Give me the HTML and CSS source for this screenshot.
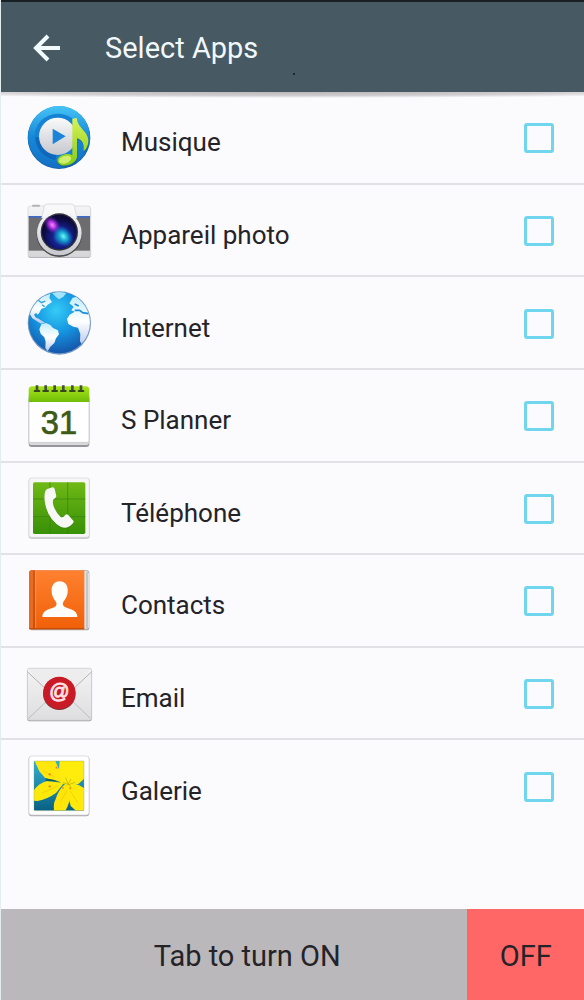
FILE: index.html
```
<!DOCTYPE html>
<html lang="fr">
<head>
  <meta charset="UTF-8">
  <meta name="viewport" content="width=device-width, initial-scale=1.0">
  <title>Select Apps</title>
  <link rel="stylesheet" href="styles.css">
</head>
<body>
  <header class="toolbar">
    <button class="back" type="button" aria-label="Back">
      <svg viewBox="0 0 28 28" width="28" height="28" fill="none" stroke="#f1fbfd" stroke-width="4">
        <path d="M27 14H4M15 2L3 14L15 26"/>
      </svg>
    </button>
    <h1>Select Apps</h1>
    <span class="speck"></span>
  </header>

  <ul class="apps">
    <li>
      <label class="app">
        <svg class="icon" viewBox="0 0 240 240">
          <defs>
            <linearGradient id="disc" x1="0" y1="0" x2="0" y2="1">
              <stop offset="0" stop-color="#45c4f6"/><stop offset=".5" stop-color="#1688d8"/><stop offset="1" stop-color="#1470c4"/>
            </linearGradient>
            <linearGradient id="silver" x1="0" y1="0" x2="0" y2="1">
              <stop offset="0" stop-color="#fafafa"/><stop offset="1" stop-color="#c6c8ce"/>
            </linearGradient>
            <linearGradient id="note" x1="0" y1="0" x2="0" y2="1">
              <stop offset="0" stop-color="#d9f25a"/><stop offset="1" stop-color="#86cc14"/>
            </linearGradient>
          </defs>
          <circle cx="117" cy="119" r="94" fill="#0f5ea6"/>
          <circle cx="117" cy="117" r="93" fill="url(#disc)"/>
          <circle cx="114" cy="118" r="71" fill="#1682d4"/>
          <path d="M46 118a70 70 0 0 0 60 69l4-16a54 54 0 0 1-50-53z" fill="#0f68bb"/>
          <circle cx="113" cy="115" r="56" fill="url(#silver)"/>
          <path d="M98 92L137 115L98 139Z" fill="#1c84d8"/>
          <path d="M160 66L170 62C173 91 205 100 207 130C207 146 199 161 190 167C194 146 190 133 172 124V184C167 205 139 213 122 204C105 193 114 176 137 173C147 172 153 174 158 176Z" fill="#1a558b" opacity=".55"/>
          <path d="M157 62L170 60C173 91 203 99 205 125C206 139 200 152 191 160C193 139 188 126 171 121V178C167 198 137 208 121 200C103 190 115 172 137 168C146 167 152 169 157 171Z" fill="url(#note)"/>
          <ellipse cx="135" cy="185" rx="19" ry="11" transform="rotate(-18 135 185)" fill="#eafa97" opacity=".7"/>
        </svg>
        <span class="name">Musique</span>
        <input type="checkbox">
      </label>
    </li>
    <li>
      <label class="app">
        <svg class="icon" viewBox="0 -3 240 240">
          <defs>
            <linearGradient id="body" x1="0" y1="0" x2="0" y2="1">
              <stop offset="0" stop-color="#f4f4f6"/><stop offset="1" stop-color="#d6d6d8"/>
            </linearGradient>
            <radialGradient id="lens" cx=".55" cy=".65" r=".55">
              <stop offset="0" stop-color="#1697c6"/><stop offset=".45" stop-color="#15208c"/><stop offset="1" stop-color="#0c0838"/>
            </radialGradient>
            <radialGradient id="pink"><stop offset="0" stop-color="#f68bff"/><stop offset=".4" stop-color="#b131e0"/><stop offset="1" stop-color="#5a1bb0" stop-opacity="0"/></radialGradient>
            <radialGradient id="cyan"><stop offset="0" stop-color="#6ffaf0"/><stop offset=".4" stop-color="#18a8d4"/><stop offset="1" stop-color="#1468c0" stop-opacity="0"/></radialGradient>
          </defs>
          <rect x="24" y="44" width="188" height="154" rx="8" fill="#a9a9ac"/>
          <rect x="24" y="42" width="188" height="153" rx="8" fill="url(#body)" stroke="#d2d2d6" stroke-width="2"/>
          <rect x="36" y="38" width="24" height="6" rx="3" fill="#b4b4b7"/>
          <rect x="26" y="73" width="184" height="103" fill="#6d6c6e"/>
          <rect x="26" y="72" width="184" height="5" fill="#3e69c8"/>
          <path d="M65 78L73 43Q75 36 82 36H154Q161 36 163 43L171 78Z" fill="#f8f8f9" stroke="#cfd0d3" stroke-width="2"/>
          <circle cx="118" cy="127" r="68" fill="#4c4c4f"/>
          <circle cx="118" cy="123" r="67" fill="url(#silver)"/>
          <circle cx="118" cy="120" r="56" fill="#34343c"/>
          <circle cx="118" cy="120" r="52" fill="url(#lens)"/>
          <ellipse cx="97" cy="99" rx="22" ry="30" transform="rotate(-40 97 99)" fill="url(#pink)"/>
          <ellipse cx="130" cy="133" rx="27" ry="36" transform="rotate(-40 130 133)" fill="url(#cyan)"/>
        </svg>
        <span class="name">Appareil photo</span>
        <input type="checkbox">
      </label>
    </li>
    <li>
      <label class="app">
        <svg class="icon" viewBox="0 0 240 240">
          <defs>
            <radialGradient id="sea" cx=".45" cy=".3" r=".7">
              <stop offset="0" stop-color="#36ccf6"/><stop offset=".5" stop-color="#1597e2"/><stop offset="1" stop-color="#1557ab"/>
            </radialGradient>
            <linearGradient id="land" x1="0" y1="0" x2="0" y2="1">
              <stop offset="0" stop-color="#c2ecfc"/><stop offset=".5" stop-color="#fff"/><stop offset="1" stop-color="#b9c8ec"/>
            </linearGradient>
            <clipPath id="globe"><circle cx="118" cy="116" r="92"/></clipPath>
          </defs>
          <circle cx="118" cy="117" r="95" fill="#7298c4"/>
          <circle cx="118" cy="116" r="92" fill="url(#sea)"/>
          <g clip-path="url(#globe)">
            <path d="M50 53L66 38L91 29L88 42L96 54L83 62L75 71L64 74L58 86L53 92L48 87L42 92L48 101L56 104L65 110L75 116L63 119L50 111L37 103L28 88L36 65Z" fill="url(#land)"/>
            <path d="M64 121L78 117L91 123L99 132L114 139L117 151L108 163L103 177L91 188L83 202L76 192L77 174L73 160L62 149L58 136Z" fill="url(#land)"/>
            <path d="M96 27L119 22L139 27L130 38L117 46L108 39Z" fill="#a4e3fa"/>
            <path d="M148 58L158 41L171 38L188 53L206 77L213 106L213 150L200 174L187 185L180 171L181 150L174 131L160 128L145 120L141 105L149 92L164 83L154 79L161 68Z" fill="url(#land)"/>
            <path d="M164 79L179 79L188 86L205 89M164 60L176 66" fill="none" stroke="#1a8edc" stroke-width="5"/>
            <path d="M54 48L65 56L76 51M66 62L74 68" fill="none" stroke="#249fe2" stroke-width="4"/>
          </g>
        </svg>
        <span class="name">Internet</span>
        <input type="checkbox">
      </label>
    </li>
    <li>
      <label class="app">
        <svg class="icon" viewBox="0 0 240 240">
          <defs>
            <linearGradient id="lime" x1="0" y1="0" x2="0" y2="1">
              <stop offset="0" stop-color="#a9e51c"/><stop offset="1" stop-color="#70bd07"/>
            </linearGradient>
          </defs>
          <rect x="26" y="60" width="182" height="153" rx="9" fill="#96969a"/>
          <rect x="27" y="60" width="180" height="147" rx="7" fill="#d9d9dc"/>
          <rect x="27" y="60" width="180" height="139" rx="5" fill="#fff" stroke="#c4c4c6" stroke-width="2"/>
          <path d="M26 78V42Q26 31 36 31H198Q208 31 208 42V78Z" fill="url(#lime)"/>
          <path d="M51 28V44M77 28V44M104 28V44M130 28V44M157 28V44M183 28V44" stroke="#46513d" stroke-width="8"/>
          <path d="M44 45h14M70 45h14M97 45h14M123 45h14M150 45h14M176 45h14" stroke="#34451f" stroke-width="6" stroke-linecap="round"/>
          <text x="117" y="173" text-anchor="middle" class="date">31</text>
        </svg>
        <span class="name">S Planner</span>
        <input type="checkbox">
      </label>
    </li>
    <li>
      <label class="app">
        <svg class="icon" viewBox="0 -3 240 240">
          <defs>
            <linearGradient id="green" x1="0" y1="0" x2="0" y2="1">
              <stop offset="0" stop-color="#70b916"/><stop offset="1" stop-color="#379006"/>
            </linearGradient>
          </defs>
          <rect x="26" y="25" width="183" height="181" rx="9" fill="#bfbfc3"/>
          <rect x="27" y="24" width="181" height="178" rx="8" fill="#f6f6f7" stroke="#d4d4d8" stroke-width="2"/>
          <rect x="39" y="37" width="157" height="155" rx="5" fill="url(#green)"/>
          <path d="M90 37V192M143 37V192M39 87H196M39 140H196" stroke="#38820d" stroke-width="2"/>
          <path d="M79 61L97 54Q102 53 104 60L109 81Q110 86 101 91Q96 96 101 111Q109 133 122 144Q128 147 133 142Q138 134 144 137L160 155Q163 160 156 166Q142 181 123 174Q82 151 74 97Q71 69 79 61Z" fill="#2d6e0a" opacity=".4"/>
          <path d="M80 58L97 52Q102 51 104 57L109 78Q110 83 101 88Q96 94 101 109Q109 130 122 141Q128 144 133 138Q138 131 144 134L160 152Q163 157 156 163Q142 178 123 171Q82 148 74 94Q71 66 80 58Z" fill="#f8f9f6"/>
        </svg>
        <span class="name">Téléphone</span>
        <input type="checkbox">
      </label>
    </li>
    <li>
      <label class="app">
        <svg class="icon" viewBox="0 -1 240 240">
          <defs>
            <linearGradient id="orange" x1="0" y1="0" x2="0" y2="1">
              <stop offset="0" stop-color="#ff8130"/><stop offset="1" stop-color="#f06008"/>
            </linearGradient>
          </defs>
          <rect x="30" y="27" width="178" height="180" rx="8" fill="#a3a5a7"/>
          <path d="M190 29H200Q207 31 207 38V197Q207 203 199 204H190Z" fill="#dfe0e1"/>
          <path d="M201 33V202" stroke="#8e9294" stroke-width="2"/>
          <path d="M35 27H193V204H35Q27 204 27 196V35Q27 27 35 27Z" fill="url(#orange)"/>
          <path d="M27 35Q27 27 35 27H40V204H35Q27 204 27 196Z" fill="#e96b22"/>
          <path d="M42 27V204" stroke="#b64b10" stroke-width="4"/>
          <path d="M47 28V203" stroke="#ff995a" stroke-width="2"/>
          <path d="M27 202H193" stroke="#c54d08" stroke-width="4"/>
          <path d="M119 60C102 60 94 74 95 89C95 104 102 113 108 122C112 130 108 136 99 139C81 145 67 149 67 167H172C172 149 158 145 140 139C131 136 126 130 130 122C137 112 143 104 143 89C144 73 136 60 119 60Z" fill="#fffdf9"/>
        </svg>
        <span class="name">Contacts</span>
        <input type="checkbox">
      </label>
    </li>
    <li>
      <label class="app">
        <svg class="icon" viewBox="0 -3 240 240">
          <defs>
            <linearGradient id="paper" x1="0" y1="0" x2="0" y2="1">
              <stop offset="0" stop-color="#f3f3f3"/><stop offset="1" stop-color="#dedee0"/>
            </linearGradient>
          </defs>
          <rect x="22" y="43" width="193" height="156" rx="6" fill="#9c9ca0"/>
          <rect x="22" y="40" width="193" height="156" rx="6" fill="url(#paper)" stroke="#c4c4c7" stroke-width="2"/>
          <path d="M25 191L93 126M212 191L144 126" stroke="#bdbdc0" stroke-width="3"/>
          <path d="M25 42H212L136 124Q118 139 101 124Z" fill="#ededee"/>
          <path d="M23 51L101 124Q118 139 136 124L214 51" fill="none" stroke="#b2b2b5" stroke-width="3"/>
          <circle cx="118" cy="116" r="49" fill="#8e3034"/>
          <circle cx="118" cy="113" r="48" fill="#c91a25"/>
          <text x="118" y="130" text-anchor="middle" class="at">@</text>
        </svg>
        <span class="name">Email</span>
        <input type="checkbox">
      </label>
    </li>
    <li>
      <label class="app">
        <svg class="icon" viewBox="0 -1 240 240">
          <defs>
            <linearGradient id="teal" x1="0" y1="0" x2="0" y2="1">
              <stop offset="0" stop-color="#31b0d4"/><stop offset="1" stop-color="#086083"/>
            </linearGradient>
            <clipPath id="photo"><rect x="42" y="41" width="150" height="149" rx="3"/></clipPath>
          </defs>
          <rect x="26" y="27" width="182" height="180" rx="9" fill="#aaaaae"/>
          <rect x="27" y="26" width="180" height="177" rx="8" fill="#fff" stroke="#ceced1" stroke-width="2"/>
          <g clip-path="url(#photo)">
            <rect x="42" y="41" width="150" height="149" fill="url(#teal)"/>
            <path d="M44 41H106L119 70L140 112L101 99L76 93L58 72Z" fill="#ffe60c"/>
            <path d="M119 41H192V94L176 109L150 118L124 98L117 68Z" fill="#ffec0d"/>
            <path d="M42 128Q57 107 82 101L132 107L108 137Q83 155 53 161L42 160Z" fill="#fce90c"/>
            <path d="M138 107L154 127L150 157L142 179L136 190H102Q99 170 107 155Q115 128 138 107Z" fill="#ffe50a"/>
            <path d="M142 106L176 113L192 122V190H168L152 176L145 145Z" fill="#ffe90b"/>
            <path d="M76 93L101 97L122 105L98 102L78 101Z" fill="#145f58"/>
            <path d="M130 106L146 112L166 105M144 111L137 91M146 111L155 123M145 110L153 95" fill="none" stroke="#a9ae14" stroke-width="2"/>
            <path d="M68 70L104 89M66 137L114 116M122 163L140 130M173 166L152 132" fill="none" stroke="#efd406" stroke-width="3"/>
            <path d="M86 81h6M86 117h6M107 61h5M127 122h4M148 123h4" stroke="#ee781b" stroke-width="5"/>
          </g>
          <rect x="42" y="41" width="150" height="149" rx="3" fill="none" stroke="#8a9a5e" stroke-width="1"/>
        </svg>
        <span class="name">Galerie</span>
        <input type="checkbox">
      </label>
    </li>
  </ul>

  <footer class="switch">
    <button class="turn-on" type="button">Tab to turn ON</button>
    <button class="off" type="button">OFF</button>
  </footer>
</body>
</html>
```
FILE: styles.css
```
* {
  box-sizing: border-box;
}

body {
  margin: 0;
  min-height: 100vh;
  display: flex;
  flex-direction: column;
  border-left: 1px solid #e3edf0;
  background: #fbfafd;
  color: #242328;
  font-family: Roboto, sans-serif;
}

button {
  border: none;
  font-family: inherit;
  color: inherit;
  cursor: pointer;
}

.toolbar {
  position: relative;
  display: flex;
  align-items: center;
  gap: 44px;
  height: 92px;
  padding: 2px 32px 0;
  border-top: 2px solid #182025;
  background: #475962;
}

/* thin curved shadow under the bar */
.toolbar::after {
  content: "";
  position: absolute;
  left: 0;
  right: 0;
  top: 100%;
  height: 6px;
  background: radial-gradient(75% 6px at 50% 0, #bab6ba, #d0cdd1 60%, transparent);
}

.back {
  display: flex;
  padding: 0;
  background: none;
}

.toolbar h1 {
  margin: 0;
  color: #f1f8fb;
  font-size: 29px;
  line-height: 36px;
  font-weight: 400;
}

.speck {
  position: absolute;
  left: 50%;
  bottom: 17px;
  width: 2px;
  height: 2px;
  background: #1d292f;
}

/* rows share the free height equally */
.apps {
  flex: 1;
  display: grid;
  grid-auto-rows: 1fr;
  margin: 0;
  padding: 0 0 76px;
  list-style: none;
}

.apps li {
  display: flex;
  border-bottom: 2px solid #e2e1e5;
}

.apps li:last-child {
  border-bottom-color: transparent;
}

.app {
  flex: 1;
  display: flex;
  align-items: center;
  padding: 2px 30px 0 19px;
  cursor: pointer;
}

.icon {
  width: 80px;
  height: 80px;
}

.name {
  flex: 1;
  padding: 8px 0 0 21px;
  font-size: 26px;
  line-height: 32px;
}

.app input {
  appearance: none;
  width: 30px;
  height: 30px;
  margin: 0;
  border: 3px solid #70d6ee;
  border-radius: 3px;
  cursor: pointer;
}

.app input:checked {
  background: #70d6ee;
}

.date {
  font-family: "Liberation Sans", sans-serif;
  font-size: 98px;
  fill: #3d5a17;
  stroke: #3d5a17;
  stroke-width: 2px;
}

.at {
  font-family: "Liberation Sans", sans-serif;
  font-size: 60px;
  fill: #fbdfe0;
  stroke: #fbdfe0;
  stroke-width: 3px;
}

.switch {
  display: flex;
  height: 91px;
}

.switch button {
  padding-top: 4px;
  font-size: 29px;
}

.switch .turn-on {
  flex: 1;
  padding-left: 32px;
  background: #bab8bb;
}

.switch .off {
  width: 20%;
  background: #ff6766;
}
```
